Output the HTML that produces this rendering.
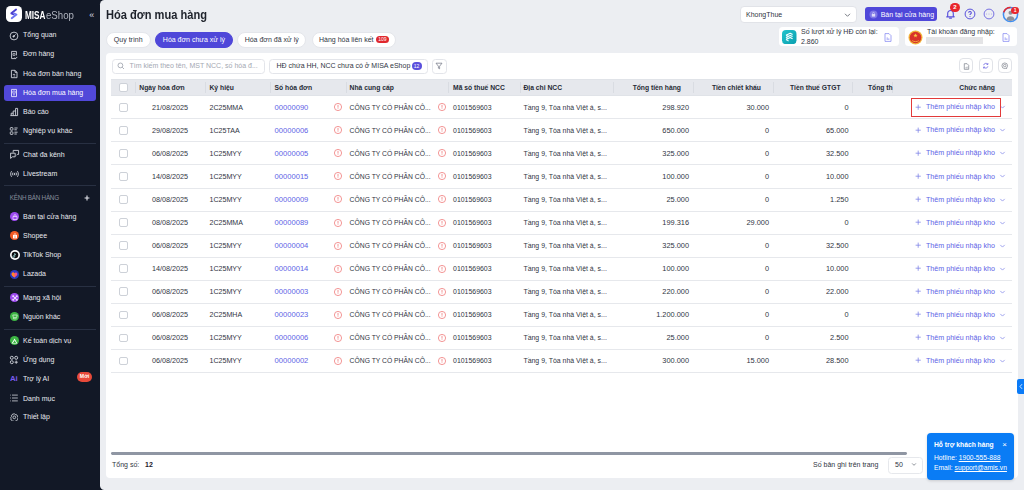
<!DOCTYPE html>
<html><head><meta charset="utf-8"><title>Hóa đơn mua hàng</title>
<style>
*{box-sizing:border-box;margin:0;padding:0}
html,body{width:1024px;height:490px;overflow:hidden}
body{position:relative;background:#121826;font-family:"Liberation Sans",sans-serif;color:#262b36;font-size:7px}
.t{position:absolute;white-space:nowrap;line-height:10px;font-size:7px;color:#30353f}
.r{text-align:right}
.b{font-weight:700}
.lk{color:#5d63e6}
.pl{color:#6b72e0;font-size:9px}
#main{position:absolute;left:100px;top:0;width:924px;height:490px;background:#eceef2;border-radius:4.5px 0 0 4.5px}
.card{position:absolute;left:106px;top:53px;width:912px;height:425px;background:#fff;border-radius:4px}
.rl{position:absolute;left:111px;width:901px;height:1px;background:#e6e8ec}
.cb{position:absolute;left:119.2px;width:8.8px;height:8.8px;border:1px solid #cdd1d8;border-radius:2px;background:#fff}
.wi{position:absolute;width:10px;height:10px}
.wi svg{display:block}
.chev{position:absolute}
.redbox{position:absolute;left:911.2px;top:97.9px;width:90.2px;height:19px;border:1.3px solid #e23a3a}
.th{position:absolute;top:79px;left:111px;width:901px;height:17px;background:#e6e8ed;border-top:1px solid #e0e3e8;border-bottom:1px solid #e0e3e8}
.hs{position:absolute;top:82px;width:1px;height:11px;background:#d9dce2}
.ht{position:absolute;white-space:nowrap;line-height:10px;top:82.8px;font-size:6.75px;font-weight:700;color:#262b36}
.mi{position:absolute;left:23px;white-space:nowrap;line-height:10px;font-size:7px;color:#e8eaf0}
.ic{position:absolute;left:9px}
.dv{position:absolute;left:4px;width:92px;height:1px;background:#283042}
.ch{position:absolute;left:10px;width:9px;height:9px;border-radius:50%}
.pill{position:absolute;top:31.5px;height:16px;border-radius:8px;background:#fff;border:0.8px solid #e4e6eb;line-height:14.4px;font-size:7px;color:#30353f;text-align:center;white-space:nowrap}
.ibtn{position:absolute;top:58.3px;width:14.3px;height:15.2px;border:1px solid #e1e3e8;border-radius:4px;background:#fff}

</style></head><body>
<div style="position:absolute;left:6px;top:6.1px;width:15.8px;height:15.8px;border-radius:4.5px;background:#fff"></div>
<svg style="position:absolute;left:6px;top:6.1px" width="15.8" height="15.8" viewBox="0 0 16 16"><path d="M10.2 3.6 5.4 7.4 7.6 8.4" fill="none" stroke="#4a40cf" stroke-width="1.9" stroke-linejoin="round" stroke-linecap="round"/><path d="M8.4 7.6 10.6 8.6 5.8 12.4" fill="none" stroke="#6b73f2" stroke-width="1.9" stroke-linejoin="round" stroke-linecap="round"/></svg>
<div class="t" style="left:25.4px;top:10.2px;font-size:10.5px;line-height:10px;color:#fff;font-weight:700;transform:scaleX(0.78);transform-origin:0 0">MISA</div>
<div class="t" style="left:46.4px;top:10.2px;font-size:10.5px;line-height:10px;color:#aeb2bd;transform:scaleX(0.92);transform-origin:0 0">eShop</div>
<div class="t" style="left:89.3px;top:9.6px;font-size:9px;color:#d6d9e0">«</div>
<svg class="ic" style="top:30.5px" width="10" height="10" viewBox="0 0 10 10" fill="none" stroke="#d3d6de" stroke-width="0.9"><circle cx="5" cy="5" r="3.9"/><path d="M6.6 3.4 4.8 5.2"/><circle cx="4.6" cy="5.4" r="0.7" fill="#d3d6de"/></svg>
<div class="mi" style="top:30px">Tổng quan</div>
<svg class="ic" style="top:49.5px" width="10" height="10" viewBox="0 0 10 10" fill="none" stroke="#d3d6de" stroke-width="0.9"><path d="M6.8 8.6H2.6V1.4h4.8v4"/><path d="M4 3.4h2v2H4z" stroke-width="0.7"/><path d="M5.8 7.6l.9.9 1.6-1.6"/></svg>
<div class="mi" style="top:49px">Đơn hàng</div>
<svg class="ic" style="top:68.5px" width="10" height="10" viewBox="0 0 10 10" fill="none" stroke="#d3d6de" stroke-width="0.9"><path d="M2.4 1.3h3.6l2 2v5.4H2.4z"/><path d="M6 1.3v2h2"/><path d="M3.8 5.4h2.4M4.6 7h1.6" stroke-width="0.8"/></svg>
<div class="mi" style="top:68.8px">Hóa đơn bán hàng</div>
<div style="position:absolute;left:3.7px;top:85.3px;width:92.3px;height:15.5px;border-radius:3px;background:#5148d9"></div>
<svg class="ic" style="top:87.7px" width="10" height="10" viewBox="0 0 10 10" fill="none" stroke="#e6e4fb" stroke-width="0.9"><path d="M2.5 1.4h5v7.2h-5z"/><path d="M3.8 3h2.4v2.2H3.8z" stroke-width="0.7"/><path d="M4 6.8h2" stroke-width="0.7"/></svg>
<div class="mi" style="top:87.7px;color:#fff">Hóa đơn mua hàng</div>
<svg class="ic" style="top:107px" width="10" height="10" viewBox="0 0 10 10" fill="none" stroke="#d3d6de" stroke-width="0.9"><path d="M1.4 8.6h7.2V1.4H6.6v7.2M6.6 4H4.2v4.6M4.2 6.2H2.2v2.4"/></svg>
<div class="mi" style="top:107px">Báo cáo</div>
<svg class="ic" style="top:126px" width="10" height="10" viewBox="0 0 10 10" fill="none" stroke="#d3d6de" stroke-width="0.9"><rect x="1.3" y="1.6" width="2.6" height="2.6" rx="0.6"/><rect x="1.3" y="5.8" width="2.6" height="2.6" rx="0.6"/><path d="M5.4 2h3.2M5.4 3.8h2.4M5.4 6.2h3.2M5.4 8h2.4"/></svg>
<div class="mi" style="top:126px;font-size:7.15px">Nghiệp vụ khác</div>
<div class="dv" style="top:143px"></div>
<svg class="ic" style="top:149px" width="11" height="11" viewBox="0 0 11 11" fill="none" stroke="#d3d6de" stroke-width="0.9"><path d="M4.2 1.4h5.4v4H8.4l-.8 .9M4.2 1.4v2.2"/><path d="M1.4 4.2h4.8v3.6H3.4l-1.8 1.6V4.2"/></svg>
<div class="mi" style="top:149.5px">Chat đa kênh</div>
<svg class="ic" style="top:169px" width="11" height="10" viewBox="0 0 11 10" fill="none" stroke="#d3d6de" stroke-width="0.9"><path d="M2.6 2.2C1.4 3.6 1.4 6.4 2.6 7.8M8.4 2.2c1.2 1.4 1.2 4.2 0 5.6M3.9 3.6c-.6.8-.6 2 0 2.8M7.1 3.6c.6.8.6 2 0 2.8"/><circle cx="5.5" cy="5" r="0.6" fill="#d3d6de"/></svg>
<div class="mi" style="top:169px">Livestream</div>
<div class="dv" style="top:185.3px"></div>
<div class="mi" style="left:9.8px;top:192.9px;font-size:6.3px;letter-spacing:-0.24px;color:#878d9c">KÊNH BÁN HÀNG</div>
<svg class="ic" style="left:84.2px;top:195px" width="6" height="6" viewBox="0 0 6 6"><path d="M3 .6v4.8M.6 3h4.8" stroke="#e6e8ee" stroke-width="1.1"/></svg>
<div class="ch" style="top:212.2px;background:#9d4af0"></div>
<svg class="ic" style="left:11.5px;top:214px" width="6" height="6" viewBox="0 0 6 6" fill="none" stroke="#f0e6ff" stroke-width="0.7"><path d="M1 2.5h4v3H1z"/><path d="M2 2.5V1.6a1 1 0 0 1 2 0v.9"/></svg>
<div class="mi" style="top:211.6px">Bán tại cửa hàng</div>
<div class="ch" style="top:231.4px;background:#f25a24"></div>
<svg class="ic" style="left:11.5px;top:233.4px" width="6" height="6" viewBox="0 0 6 6"><path d="M1 2h4v3.4H1z" fill="#fff"/><path d="M2.2 2V1.4a.8.8 0 0 1 1.6 0V2" fill="none" stroke="#fff" stroke-width="0.6"/><path d="M3 2.6v2.4" stroke="#f25a24" stroke-width="0.6"/></svg>
<div class="mi" style="top:231.1px">Shopee</div>
<svg class="ic" style="left:9.5px;top:250.2px" width="10" height="10" viewBox="0 0 10 10"><circle cx="5" cy="5" r="5" fill="#fff"/><circle cx="5" cy="5" r="3.3" fill="#0d0d10"/></svg>
<svg class="ic" style="left:12.3px;top:252.6px" width="5" height="5" viewBox="0 0 5 5" fill="none" stroke="#bff" stroke-width="0.7"><path d="M2.7 .5v3a.9.9 0 1 1-.9-.9M2.7 .5c.2.6.6 1 1.3 1.1"/></svg>
<div class="mi" style="top:250.1px">TikTok Shop</div>
<div class="ch" style="top:270px;background:#2c3bbd"></div>
<svg class="ic" style="left:11.3px;top:272px" width="7" height="6" viewBox="0 0 7 6"><path d="M3.5 5.4C1.6 4.2.6 3.2.6 2 .6 1 1.4.4 2.2.4c.6 0 1 .3 1.3.8.3-.5.7-.8 1.3-.8.8 0 1.6.6 1.6 1.6 0 1.2-1 2.2-2.9 3.4z" fill="#f5508a"/><path d="M3.5 5.4C1.6 4.2.6 3.2.6 2 .6 1 1.4.4 2.2.4c.6 0 1 .3 1.3.8z" fill="#ff8a1e"/></svg>
<div class="mi" style="top:269.1px">Lazada</div>
<div class="dv" style="top:286px"></div>
<div class="ch" style="top:293.2px;background:#9d4af0"></div>
<svg class="ic" style="left:11.5px;top:295.2px" width="6" height="6" viewBox="0 0 6 6" fill="#f3eaff" stroke="#f3eaff" stroke-width="0.6"><path d="M1.2 1.2 4.8 4.8M4.8 1.2 1.2 4.8"/><circle cx="1.2" cy="1.2" r=".7"/><circle cx="4.8" cy="1.2" r=".7"/><circle cx="1.2" cy="4.8" r=".7"/><circle cx="4.8" cy="4.8" r=".7"/><circle cx="3" cy="3" r=".8"/></svg>
<div class="mi" style="top:293.1px">Mạng xã hội</div>
<div class="ch" style="top:312.3px;background:#3db544"></div>
<svg class="ic" style="left:11.5px;top:314.3px" width="6" height="6" viewBox="0 0 6 6" fill="none" stroke="#dff5df" stroke-width="0.7"><path d="M.8 1h4.4L4.6 3.6H1.4z"/><path d="M1.4 3.6v1.2h3.2"/></svg>
<div class="mi" style="top:312.1px">Nguồn khác</div>
<div class="dv" style="top:329.4px"></div>
<div class="ch" style="top:336px;background:#3db544"></div>
<svg class="ic" style="left:11px;top:337.5px" width="7" height="6" viewBox="0 0 7 6" fill="#fff"><path d="M3.6.6 6.4 5.4H.6z M3.6 2.2 2 5h3.2z" fill-rule="evenodd"/></svg>
<div class="mi" style="top:336.1px">Kế toán dịch vụ</div>
<svg class="ic" style="top:354.5px" width="10" height="10" viewBox="0 0 10 10" fill="none" stroke="#d3d6de" stroke-width="0.9"><circle cx="2.8" cy="2.8" r="1.5"/><circle cx="7.2" cy="2.8" r="1.5"/><circle cx="2.8" cy="7.2" r="1.5"/><path d="M7.2 5.6v3.2M5.6 7.2h3.2"/></svg>
<div class="mi" style="top:354.5px">Ứng dụng</div>
<div class="mi" style="left:10px;top:373.6px;color:#7b5cf4;font-weight:700;font-size:7.8px;letter-spacing:-0.2px">Ai</div>
<div class="mi" style="top:373.5px">Trợ lý AI</div>
<div style="position:absolute;left:76.9px;top:372.2px;width:15.3px;height:9.6px;border-radius:5px;background:#e84a3a;color:#fff;font-size:5.2px;line-height:9.6px;text-align:center;font-weight:700">Mới</div>
<svg class="ic" style="top:393.3px" width="10" height="10" viewBox="0 0 10 10" fill="none" stroke="#d3d6de" stroke-width="0.8"><path d="M1.2 2.1h.7M3 2.1h5.8M1.2 5h.7M3 5h5.8M1.2 7.9h.7M3 7.9h5.8"/></svg>
<div class="mi" style="top:393.5px">Danh mục</div>
<svg class="ic" style="left:9.7px;top:412.6px" width="8.6" height="8.6" viewBox="0 0 10 10" fill="none" stroke="#d3d6de" stroke-width="0.95"><path d="M5 .9l1 .9 1.3-.2.5 1.2 1.2.5-.2 1.3.9 1-.9 1 .2 1.3-1.2.5-.5 1.2-1.3-.2-1 .9-1-.9-1.3.2-.5-1.2-1.2-.5.2-1.3L.9 5l.9-1-.2-1.3 1.2-.5.5-1.2 1.3.2z"/><circle cx="5" cy="5" r="1.6"/></svg>
<div class="mi" style="top:412px">Thiết lập</div>

<div id="main"></div>
<div class="t b" style="left:106px;top:8.1px;font-size:12.3px;line-height:14px;color:#1e222b;transform:scaleX(0.903);transform-origin:0 0">Hóa đơn mua hàng</div>
<div class="pill" style="left:106px;width:44.5px">Quy trình</div>
<div class="pill" style="left:155.3px;width:77.3px;background:#4f47d9;border-color:#4f47d9;color:#fff">Hóa đơn chưa xử lý</div>
<div class="pill" style="left:237.2px;width:69px">Hóa đơn đã xử lý</div>
<div class="pill" style="left:311.5px;width:84.7px;text-align:left;padding-left:6.5px">Hàng hóa liên kết</div>
<div style="position:absolute;left:376px;top:36.3px;width:12.7px;height:6.7px;border-radius:3.5px;background:#e0282e;color:#fff;font-size:5px;line-height:6.7px;text-align:center">109</div>
<!-- dropdown -->
<div style="position:absolute;left:740.2px;top:6px;width:116.6px;height:17px;border-radius:4px;background:#fff;border:1px solid #e1e3e8"></div>
<div class="t" style="left:746px;top:9.5px">KhongThue</div>
<svg style="position:absolute;left:844px;top:11.5px" width="7" height="6" viewBox="0 0 7 6"><path d="M1 1.8l2.5 2.5L6 1.8" fill="none" stroke="#555b66" stroke-width="0.8"/></svg>
<div style="position:absolute;left:865px;top:7.1px;width:72px;height:14px;border-radius:3px;background:#4f47d9"></div>
<svg style="position:absolute;left:869px;top:10px" width="9" height="9" viewBox="0 0 9 9"><circle cx="4.5" cy="4.5" r="4" fill="#7d76e6"/><path d="M2.8 4h3.4v2.6H2.8z" fill="#dcdaf8"/><path d="M3.6 4V3.3a.9.9 0 0 1 1.8 0V4" fill="none" stroke="#dcdaf8" stroke-width="0.6"/></svg>
<div class="t" style="left:880.7px;top:9.6px;color:#fff">Bán tại cửa hàng</div>
<!-- bell -->
<svg style="position:absolute;left:945.3px;top:8px" width="11" height="11" viewBox="0 0 11 11" fill="none" stroke="#5a52dc" stroke-width="1.15"><path d="M2.7 7.9V5.3a2.8 2.8 0 0 1 5.6 0v2.6l.9 1H1.8z" stroke-linejoin="round"/><path d="M4.5 10.1h2" stroke-linecap="round"/></svg>
<div style="position:absolute;left:950px;top:2.8px;width:9.6px;height:9.6px;border-radius:50%;background:#e8262c;color:#fff;font-size:6px;line-height:9.6px;text-align:center;font-weight:700">2</div>
<!-- help -->
<svg style="position:absolute;left:964px;top:8.1px" width="12" height="12" viewBox="0 0 12 12" fill="none" stroke="#5a52dc" stroke-width="1"><circle cx="6" cy="6" r="4.9"/><path d="M4.7 4.8a1.3 1.3 0 1 1 1.9 1.1c-.4.2-.6.5-.6.9v.3" stroke-width="1.1"/><circle cx="6" cy="8.5" r="0.6" fill="#5a52dc" stroke="none"/></svg>
<svg style="position:absolute;left:983.2px;top:8.1px" width="12" height="12" viewBox="0 0 12 12"><circle cx="6" cy="6" r="4.9" fill="none" stroke="#6a62e0" stroke-width="0.9"/><circle cx="3.5" cy="6" r="0.45" fill="#7a73e4"/><circle cx="6" cy="6" r="0.45" fill="#7a73e4"/><circle cx="8.5" cy="6" r="0.45" fill="#7a73e4"/></svg>
<!-- avatar -->
<svg style="position:absolute;left:1002px;top:5.7px" width="17" height="17" viewBox="0 0 17 17"><circle cx="8.5" cy="8.5" r="7.1" fill="#ececee" stroke="#3f8ef2" stroke-width="1.5"/><path d="M1.7 6.4A7.1 7.1 0 0 1 8.5 1.4" fill="none" stroke="#e8262c" stroke-width="1.5"/><circle cx="8.5" cy="6.8" r="2" fill="#8e9199"/><path d="M4.4 13.6c.3-2.2 2-3.4 4.1-3.4s3.8 1.2 4.1 3.4c-1.1.9-2.5 1.4-4.1 1.4s-3-.5-4.1-1.4z" fill="#8e9199"/></svg>
<div style="position:absolute;left:1011.3px;top:6.6px;width:7.6px;height:7.6px;border-radius:50%;background:#e8262c;color:#fff;font-size:5px;line-height:7.6px;text-align:center;font-weight:700">1</div>
<!-- info cards -->
<div style="position:absolute;left:778.8px;top:27.2px;width:120.7px;height:19px;border-radius:3.5px;background:#fff"></div>
<svg style="position:absolute;left:782.4px;top:29.8px" width="14.5" height="14.2" viewBox="0 0 14.5 14.2"><defs><linearGradient id="tg" x1="0" y1="0" x2="1" y2="1"><stop offset="0" stop-color="#22c4cc"/><stop offset="1" stop-color="#0a9fb0"/></linearGradient></defs><rect width="14.5" height="14.2" rx="4" fill="url(#tg)"/><path d="M4 5.2l4.2-2 2.4 1.2M4 7.4l4.2-2 2.4 1.2M4 9.6l4.2-2 2.4 1.2" fill="none" stroke="#fff" stroke-width="1.1" stroke-linejoin="round"/><path d="M4 5.2l2.6 1.3M4 7.4l2.6 1.3M4 9.6l2.6 1.3" fill="none" stroke="#e6fbfc" stroke-width="1.1"/></svg>
<div class="t" style="left:801px;top:26.6px">Số lượt xử lý HĐ còn lại:</div>
<div class="t" style="left:801px;top:36.9px">2.860</div>
<svg style="position:absolute;left:883.5px;top:32.6px" width="8" height="9" viewBox="0 0 8 9" fill="none" stroke="#8a8ef2" stroke-width="0.8"><path d="M1 .6h4l2 2v5.8H1z"/><path d="M3.2 4.4v2.6M4.8 5.4v1.6"/></svg>
<div style="position:absolute;left:904.8px;top:27.3px;width:112.6px;height:18.8px;border-radius:3.5px;background:#fff"></div>
<svg style="position:absolute;left:908px;top:29.6px" width="15" height="15" viewBox="0 0 15 15"><circle cx="7.5" cy="7.5" r="7" fill="#f2b43a"/><circle cx="7.5" cy="7.5" r="5.8" fill="#d8322a"/><path d="M7.5 3.4l.6 1.4 1.5.1-1.2 1 .4 1.5-1.3-.8-1.3.8.4-1.5-1.2-1 1.5-.1z" fill="#f7c844"/><path d="M4.2 10.6c1.8 1.4 4.8 1.4 6.6 0" fill="none" stroke="#f2b43a" stroke-width="0.9"/></svg>
<div class="t" style="left:927px;top:26.5px">Tài khoản đăng nhập:</div>
<div style="position:absolute;left:926px;top:37.1px;width:56.6px;height:7.4px;background:#e4e4e6;filter:blur(0.5px)"></div>
<svg style="position:absolute;left:1001.6px;top:33.2px" width="8" height="9" viewBox="0 0 8 9" fill="none" stroke="#8a8ef2" stroke-width="0.8"><path d="M1 .6h4l2 2v5.8H1z"/><path d="M3.2 4.4v2.6M4.8 5.4v1.6"/></svg>
<!-- card -->
<div class="card"></div>
<div style="position:absolute;left:111.5px;top:58.5px;width:153px;height:15px;border:1px solid #e3e5ea;border-radius:3.5px"></div>
<svg style="position:absolute;left:117px;top:62px" width="8" height="8" viewBox="0 0 8 8"><circle cx="3.4" cy="3.4" r="2.4" fill="none" stroke="#9aa0aa" stroke-width="0.8"/><path d="M5.2 5.2 7 7" stroke="#9aa0aa" stroke-width="0.8"/></svg>
<div class="t" style="left:129.5px;top:61px;color:#a3a8b2">Tìm kiếm theo tên, MST NCC, số hóa đ...</div>
<div style="position:absolute;left:269px;top:58.5px;width:158.5px;height:15px;border:1px solid #e3e5ea;border-radius:3.5px"></div>
<div class="t" style="left:276.5px;top:61px;color:#30353f">HĐ chứa HH, NCC chưa có ở MISA eShop</div>
<div style="position:absolute;left:411.5px;top:62px;width:10px;height:8px;border-radius:4px;background:#5a50dc;color:#fff;font-size:5px;line-height:8px;text-align:center">12</div>
<div style="position:absolute;left:431.5px;top:58.5px;width:15px;height:15px;border:1px solid #e3e5ea;border-radius:3.5px"></div>
<svg style="position:absolute;left:435px;top:62px" width="8" height="8" viewBox="0 0 8 8"><path d="M1 1.2h6L4.6 4.2v2.6L3.4 6.2V4.2z" fill="none" stroke="#6b7080" stroke-width="0.7" stroke-linejoin="round"/></svg>
<div class="ibtn" style="left:959px"></div>
<div class="ibtn" style="left:978.5px"></div>
<div class="ibtn" style="left:998px"></div>
<svg style="position:absolute;left:962.6px;top:62.6px" width="7" height="7" viewBox="0 0 7 7" fill="none" stroke="#777c87" stroke-width="0.7"><path d="M1.3.7h2.8l1.6 1.6v4H1.3z"/><path d="M3 4.2v1.2M4.1 3.6v1.8" stroke-width="0.6"/></svg>
<svg style="position:absolute;left:981.6px;top:62.3px" width="7.5" height="7.5" viewBox="0 0 8 8" fill="none" stroke="#6059de" stroke-width="0.75"><path d="M1.7 3.4A2.5 2.5 0 0 1 6.1 2.4M6.3 4.6a2.5 2.5 0 0 1-4.4 1"/><path d="M6.3 1.1v1.5H4.8M1.7 6.9V5.4h1.5"/></svg>
<svg style="position:absolute;left:1001.2px;top:62.3px" width="7.5" height="7.5" viewBox="0 0 8 8" fill="none" stroke="#777c87" stroke-width="0.7"><circle cx="4" cy="4" r="3"/><circle cx="4" cy="3.8" r="1.3"/><path d="M5.4 6.4l.9.9"/></svg>
<!-- header -->
<div class="th"></div>
<div class="cb" style="top:83px"></div>
<div class="hs" style="left:135px"></div>
<div class="hs" style="left:204.5px"></div>
<div class="hs" style="left:270px"></div>
<div class="hs" style="left:345.5px"></div>
<div class="hs" style="left:448px"></div>
<div class="hs" style="left:519.5px"></div>
<div class="hs" style="left:612.5px"></div>
<div class="hs" style="left:693px"></div>
<div class="hs" style="left:772.5px"></div>
<div class="hs" style="left:852px"></div>
<div class="hs" style="left:892px"></div>
<div class="ht" style="left:139.3px">Ngày hóa đơn</div>
<div class="ht" style="left:209.5px">Ký hiệu</div>
<div class="ht" style="left:274.6px">Số hóa đơn</div>
<div class="ht" style="left:349.6px">Nhà cung cấp</div>
<div class="ht" style="left:453.1px">Mã số thuế NCC</div>
<div class="ht" style="left:523.4px">Địa chỉ NCC</div>
<div class="ht r" style="right:343px">Tổng tiền hàng</div>
<div class="ht r" style="right:263px">Tiền chiết khấu</div>
<div class="ht r" style="right:183.5px">Tiền thuế GTGT</div>
<div class="ht" style="left:868px">Tổng th</div>
<div class="ht r" style="right:29px">Chức năng</div>
<!-- footer -->
<div style="position:absolute;left:111.3px;top:452.4px;width:795.7px;height:2.7px;border-radius:1.4px;background:#8f96a3"></div>
<div class="t" style="left:112px;top:460px">Tổng số:</div>
<div class="t b" style="left:145px;top:460px;color:#1e222b">12</div>
<div class="t" style="left:813px;top:460px">Số bản ghi trên trang</div>
<div style="position:absolute;left:887.5px;top:457px;width:35.5px;height:16.5px;border:1px solid #e6e8ec;border-radius:3.5px"></div>
<div class="t" style="left:895px;top:460px">50</div>
<svg style="position:absolute;left:910.5px;top:462.3px" width="6" height="5" viewBox="0 0 6 5"><path d="M1.1 1.4l1.9 1.9 1.9-1.9" fill="none" stroke="#6a707a" stroke-width="0.75"/></svg>
<!-- right side tab -->
<div style="position:absolute;left:1016.5px;top:379px;width:8px;height:14.5px;border-radius:2px 0 0 2px;background:#0b7bf7"></div>
<svg style="position:absolute;left:1017.5px;top:383px" width="6" height="7" viewBox="0 0 6 7"><path d="M4 1.2 2 3.5 4 5.8" fill="none" stroke="#fff" stroke-width="0.8"/></svg>
<!-- support -->
<div style="position:absolute;left:927px;top:433px;width:87px;height:47px;border-radius:4px;background:#0a7cf5;box-shadow:0 1px 3px rgba(0,0,0,.15)"></div>
<div class="t b" style="left:934px;top:439.9px;color:#fff;font-size:6.72px">Hỗ trợ khách hàng</div>
<div class="t" style="left:1002.2px;top:440.3px;color:#fff;font-size:8px">×</div>
<div class="t" style="left:934px;top:453.4px;color:#fff;font-size:6.72px">Hotline: <u style="text-decoration-thickness:0.6px;text-underline-offset:1px">1900-555-888</u></div>
<div class="t" style="left:934px;top:463.4px;color:#fff;font-size:6.72px">Email: <u style="text-decoration-thickness:0.6px;text-underline-offset:1px">support@amis.vn</u></div>

<div id="rows">
<div class="rl" style="top:118.30px"></div><div class="cb" style="top:102.80px"></div><div class="t" style="left:135px;width:70px;text-align:center;top:102.50px;font-size:7.23px">21/08/2025</div><div class="t" style="left:209.5px;top:102.50px;font-size:7.09px">2C25MMA</div><div class="t lk" style="left:274.6px;top:102.50px;font-size:7.59px">00000090</div><div class="wi" style="left:332.5px;top:102.10px"><svg width="10" height="10" viewBox="0 0 10 10"><circle cx="5" cy="5" r="3.6" fill="none" stroke="#f07c7c" stroke-width="0.8"/><path d="M5 3.3v2" stroke="#f07c7c" stroke-width="0.8" stroke-linecap="round"/><circle cx="5" cy="6.5" r="0.45" fill="#f07c7c"/></svg></div><div class="t" style="left:349.6px;top:102.50px;font-size:6.78px">CÔNG TY CỔ PHẦN CÔ...</div><div class="wi" style="left:437.2px;top:102.10px"><svg width="10" height="10" viewBox="0 0 10 10"><circle cx="5" cy="5" r="3.6" fill="none" stroke="#f07c7c" stroke-width="0.8"/><path d="M5 3.3v2" stroke="#f07c7c" stroke-width="0.8" stroke-linecap="round"/><circle cx="5" cy="6.5" r="0.45" fill="#f07c7c"/></svg></div><div class="t" style="left:453.1px;top:102.50px;font-size:6.92px">0101569603</div><div class="t" style="left:523.4px;top:102.50px;font-size:6.95px">Tầng 9, Tòa nhà Việt á, s...</div><div class="t r" style="right:335px;top:102.50px;font-size:7.39px">298.920</div><div class="t r" style="right:255px;top:102.50px;font-size:7.39px">30.000</div><div class="t r" style="right:175.5px;top:102.50px;font-size:7.39px">0</div><svg class="chev" style="left:915px;top:103.50px" width="6.4" height="6.4" viewBox="0 0 6.4 6.4"><path d="M3.2 .6v5.2M.6 3.2h5.2" stroke="#7a7fe6" stroke-width="0.75"/></svg><div class="t lk" style="left:926px;top:102.30px;font-size:7.13px">Thêm phiếu nhập kho</div><svg class="chev" style="left:999.3px;top:104.20px" width="7" height="6" viewBox="0 0 7 6"><path d="M1.3 1.9l2.2 2.2 2.2-2.2" fill="none" stroke="#7a7fe6" stroke-width="0.7"/></svg><div class="rl" style="top:141.38px"></div><div class="cb" style="top:125.88px"></div><div class="t" style="left:135px;width:70px;text-align:center;top:125.58px;font-size:7.23px">29/08/2025</div><div class="t" style="left:209.5px;top:125.58px;font-size:7.09px">1C25TAA</div><div class="t lk" style="left:274.6px;top:125.58px;font-size:7.59px">00000006</div><div class="wi" style="left:332.5px;top:125.18px"><svg width="10" height="10" viewBox="0 0 10 10"><circle cx="5" cy="5" r="3.6" fill="none" stroke="#f07c7c" stroke-width="0.8"/><path d="M5 3.3v2" stroke="#f07c7c" stroke-width="0.8" stroke-linecap="round"/><circle cx="5" cy="6.5" r="0.45" fill="#f07c7c"/></svg></div><div class="t" style="left:349.6px;top:125.58px;font-size:6.78px">CÔNG TY CỔ PHẦN CÔ...</div><div class="wi" style="left:437.2px;top:125.18px"><svg width="10" height="10" viewBox="0 0 10 10"><circle cx="5" cy="5" r="3.6" fill="none" stroke="#f07c7c" stroke-width="0.8"/><path d="M5 3.3v2" stroke="#f07c7c" stroke-width="0.8" stroke-linecap="round"/><circle cx="5" cy="6.5" r="0.45" fill="#f07c7c"/></svg></div><div class="t" style="left:453.1px;top:125.58px;font-size:6.92px">0101569603</div><div class="t" style="left:523.4px;top:125.58px;font-size:6.95px">Tầng 9, Tòa nhà Việt á, s...</div><div class="t r" style="right:335px;top:125.58px;font-size:7.39px">650.000</div><div class="t r" style="right:255px;top:125.58px;font-size:7.39px">0</div><div class="t r" style="right:175.5px;top:125.58px;font-size:7.39px">65.000</div><svg class="chev" style="left:915px;top:126.58px" width="6.4" height="6.4" viewBox="0 0 6.4 6.4"><path d="M3.2 .6v5.2M.6 3.2h5.2" stroke="#7a7fe6" stroke-width="0.75"/></svg><div class="t lk" style="left:926px;top:125.38px;font-size:7.13px">Thêm phiếu nhập kho</div><svg class="chev" style="left:999.3px;top:127.28px" width="7" height="6" viewBox="0 0 7 6"><path d="M1.3 1.9l2.2 2.2 2.2-2.2" fill="none" stroke="#7a7fe6" stroke-width="0.7"/></svg><div class="rl" style="top:164.46px"></div><div class="cb" style="top:148.96px"></div><div class="t" style="left:135px;width:70px;text-align:center;top:148.66px;font-size:7.23px">06/08/2025</div><div class="t" style="left:209.5px;top:148.66px;font-size:7.09px">1C25MYY</div><div class="t lk" style="left:274.6px;top:148.66px;font-size:7.59px">00000005</div><div class="wi" style="left:332.5px;top:148.26px"><svg width="10" height="10" viewBox="0 0 10 10"><circle cx="5" cy="5" r="3.6" fill="none" stroke="#f07c7c" stroke-width="0.8"/><path d="M5 3.3v2" stroke="#f07c7c" stroke-width="0.8" stroke-linecap="round"/><circle cx="5" cy="6.5" r="0.45" fill="#f07c7c"/></svg></div><div class="t" style="left:349.6px;top:148.66px;font-size:6.78px">CÔNG TY CỔ PHẦN CÔ...</div><div class="wi" style="left:437.2px;top:148.26px"><svg width="10" height="10" viewBox="0 0 10 10"><circle cx="5" cy="5" r="3.6" fill="none" stroke="#f07c7c" stroke-width="0.8"/><path d="M5 3.3v2" stroke="#f07c7c" stroke-width="0.8" stroke-linecap="round"/><circle cx="5" cy="6.5" r="0.45" fill="#f07c7c"/></svg></div><div class="t" style="left:453.1px;top:148.66px;font-size:6.92px">0101569603</div><div class="t" style="left:523.4px;top:148.66px;font-size:6.95px">Tầng 9, Tòa nhà Việt á, s...</div><div class="t r" style="right:335px;top:148.66px;font-size:7.39px">325.000</div><div class="t r" style="right:255px;top:148.66px;font-size:7.39px">0</div><div class="t r" style="right:175.5px;top:148.66px;font-size:7.39px">32.500</div><svg class="chev" style="left:915px;top:149.66px" width="6.4" height="6.4" viewBox="0 0 6.4 6.4"><path d="M3.2 .6v5.2M.6 3.2h5.2" stroke="#7a7fe6" stroke-width="0.75"/></svg><div class="t lk" style="left:926px;top:148.46px;font-size:7.13px">Thêm phiếu nhập kho</div><svg class="chev" style="left:999.3px;top:150.36px" width="7" height="6" viewBox="0 0 7 6"><path d="M1.3 1.9l2.2 2.2 2.2-2.2" fill="none" stroke="#7a7fe6" stroke-width="0.7"/></svg><div class="rl" style="top:187.54px"></div><div class="cb" style="top:172.04px"></div><div class="t" style="left:135px;width:70px;text-align:center;top:171.74px;font-size:7.23px">14/08/2025</div><div class="t" style="left:209.5px;top:171.74px;font-size:7.09px">1C25MYY</div><div class="t lk" style="left:274.6px;top:171.74px;font-size:7.59px">00000015</div><div class="wi" style="left:332.5px;top:171.34px"><svg width="10" height="10" viewBox="0 0 10 10"><circle cx="5" cy="5" r="3.6" fill="none" stroke="#f07c7c" stroke-width="0.8"/><path d="M5 3.3v2" stroke="#f07c7c" stroke-width="0.8" stroke-linecap="round"/><circle cx="5" cy="6.5" r="0.45" fill="#f07c7c"/></svg></div><div class="t" style="left:349.6px;top:171.74px;font-size:6.78px">CÔNG TY CỔ PHẦN CÔ...</div><div class="wi" style="left:437.2px;top:171.34px"><svg width="10" height="10" viewBox="0 0 10 10"><circle cx="5" cy="5" r="3.6" fill="none" stroke="#f07c7c" stroke-width="0.8"/><path d="M5 3.3v2" stroke="#f07c7c" stroke-width="0.8" stroke-linecap="round"/><circle cx="5" cy="6.5" r="0.45" fill="#f07c7c"/></svg></div><div class="t" style="left:453.1px;top:171.74px;font-size:6.92px">0101569603</div><div class="t" style="left:523.4px;top:171.74px;font-size:6.95px">Tầng 9, Tòa nhà Việt á, s...</div><div class="t r" style="right:335px;top:171.74px;font-size:7.39px">100.000</div><div class="t r" style="right:255px;top:171.74px;font-size:7.39px">0</div><div class="t r" style="right:175.5px;top:171.74px;font-size:7.39px">10.000</div><svg class="chev" style="left:915px;top:172.74px" width="6.4" height="6.4" viewBox="0 0 6.4 6.4"><path d="M3.2 .6v5.2M.6 3.2h5.2" stroke="#7a7fe6" stroke-width="0.75"/></svg><div class="t lk" style="left:926px;top:171.54px;font-size:7.13px">Thêm phiếu nhập kho</div><svg class="chev" style="left:999.3px;top:173.44px" width="7" height="6" viewBox="0 0 7 6"><path d="M1.3 1.9l2.2 2.2 2.2-2.2" fill="none" stroke="#7a7fe6" stroke-width="0.7"/></svg><div class="rl" style="top:210.62px"></div><div class="cb" style="top:195.12px"></div><div class="t" style="left:135px;width:70px;text-align:center;top:194.82px;font-size:7.23px">08/08/2025</div><div class="t" style="left:209.5px;top:194.82px;font-size:7.09px">1C25MYY</div><div class="t lk" style="left:274.6px;top:194.82px;font-size:7.59px">00000009</div><div class="wi" style="left:332.5px;top:194.42px"><svg width="10" height="10" viewBox="0 0 10 10"><circle cx="5" cy="5" r="3.6" fill="none" stroke="#f07c7c" stroke-width="0.8"/><path d="M5 3.3v2" stroke="#f07c7c" stroke-width="0.8" stroke-linecap="round"/><circle cx="5" cy="6.5" r="0.45" fill="#f07c7c"/></svg></div><div class="t" style="left:349.6px;top:194.82px;font-size:6.78px">CÔNG TY CỔ PHẦN CÔ...</div><div class="wi" style="left:437.2px;top:194.42px"><svg width="10" height="10" viewBox="0 0 10 10"><circle cx="5" cy="5" r="3.6" fill="none" stroke="#f07c7c" stroke-width="0.8"/><path d="M5 3.3v2" stroke="#f07c7c" stroke-width="0.8" stroke-linecap="round"/><circle cx="5" cy="6.5" r="0.45" fill="#f07c7c"/></svg></div><div class="t" style="left:453.1px;top:194.82px;font-size:6.92px">0101569603</div><div class="t" style="left:523.4px;top:194.82px;font-size:6.95px">Tầng 9, Tòa nhà Việt á, s...</div><div class="t r" style="right:335px;top:194.82px;font-size:7.39px">25.000</div><div class="t r" style="right:255px;top:194.82px;font-size:7.39px">0</div><div class="t r" style="right:175.5px;top:194.82px;font-size:7.39px">1.250</div><svg class="chev" style="left:915px;top:195.82px" width="6.4" height="6.4" viewBox="0 0 6.4 6.4"><path d="M3.2 .6v5.2M.6 3.2h5.2" stroke="#7a7fe6" stroke-width="0.75"/></svg><div class="t lk" style="left:926px;top:194.62px;font-size:7.13px">Thêm phiếu nhập kho</div><svg class="chev" style="left:999.3px;top:196.52px" width="7" height="6" viewBox="0 0 7 6"><path d="M1.3 1.9l2.2 2.2 2.2-2.2" fill="none" stroke="#7a7fe6" stroke-width="0.7"/></svg><div class="rl" style="top:233.70px"></div><div class="cb" style="top:218.20px"></div><div class="t" style="left:135px;width:70px;text-align:center;top:217.90px;font-size:7.23px">08/08/2025</div><div class="t" style="left:209.5px;top:217.90px;font-size:7.09px">2C25MMA</div><div class="t lk" style="left:274.6px;top:217.90px;font-size:7.59px">00000089</div><div class="wi" style="left:332.5px;top:217.50px"><svg width="10" height="10" viewBox="0 0 10 10"><circle cx="5" cy="5" r="3.6" fill="none" stroke="#f07c7c" stroke-width="0.8"/><path d="M5 3.3v2" stroke="#f07c7c" stroke-width="0.8" stroke-linecap="round"/><circle cx="5" cy="6.5" r="0.45" fill="#f07c7c"/></svg></div><div class="t" style="left:349.6px;top:217.90px;font-size:6.78px">CÔNG TY CỔ PHẦN CÔ...</div><div class="wi" style="left:437.2px;top:217.50px"><svg width="10" height="10" viewBox="0 0 10 10"><circle cx="5" cy="5" r="3.6" fill="none" stroke="#f07c7c" stroke-width="0.8"/><path d="M5 3.3v2" stroke="#f07c7c" stroke-width="0.8" stroke-linecap="round"/><circle cx="5" cy="6.5" r="0.45" fill="#f07c7c"/></svg></div><div class="t" style="left:453.1px;top:217.90px;font-size:6.92px">0101569603</div><div class="t" style="left:523.4px;top:217.90px;font-size:6.95px">Tầng 9, Tòa nhà Việt á, s...</div><div class="t r" style="right:335px;top:217.90px;font-size:7.39px">199.316</div><div class="t r" style="right:255px;top:217.90px;font-size:7.39px">29.000</div><div class="t r" style="right:175.5px;top:217.90px;font-size:7.39px">0</div><svg class="chev" style="left:915px;top:218.90px" width="6.4" height="6.4" viewBox="0 0 6.4 6.4"><path d="M3.2 .6v5.2M.6 3.2h5.2" stroke="#7a7fe6" stroke-width="0.75"/></svg><div class="t lk" style="left:926px;top:217.70px;font-size:7.13px">Thêm phiếu nhập kho</div><svg class="chev" style="left:999.3px;top:219.60px" width="7" height="6" viewBox="0 0 7 6"><path d="M1.3 1.9l2.2 2.2 2.2-2.2" fill="none" stroke="#7a7fe6" stroke-width="0.7"/></svg><div class="rl" style="top:256.78px"></div><div class="cb" style="top:241.28px"></div><div class="t" style="left:135px;width:70px;text-align:center;top:240.98px;font-size:7.23px">06/08/2025</div><div class="t" style="left:209.5px;top:240.98px;font-size:7.09px">1C25MYY</div><div class="t lk" style="left:274.6px;top:240.98px;font-size:7.59px">00000004</div><div class="wi" style="left:332.5px;top:240.58px"><svg width="10" height="10" viewBox="0 0 10 10"><circle cx="5" cy="5" r="3.6" fill="none" stroke="#f07c7c" stroke-width="0.8"/><path d="M5 3.3v2" stroke="#f07c7c" stroke-width="0.8" stroke-linecap="round"/><circle cx="5" cy="6.5" r="0.45" fill="#f07c7c"/></svg></div><div class="t" style="left:349.6px;top:240.98px;font-size:6.78px">CÔNG TY CỔ PHẦN CÔ...</div><div class="wi" style="left:437.2px;top:240.58px"><svg width="10" height="10" viewBox="0 0 10 10"><circle cx="5" cy="5" r="3.6" fill="none" stroke="#f07c7c" stroke-width="0.8"/><path d="M5 3.3v2" stroke="#f07c7c" stroke-width="0.8" stroke-linecap="round"/><circle cx="5" cy="6.5" r="0.45" fill="#f07c7c"/></svg></div><div class="t" style="left:453.1px;top:240.98px;font-size:6.92px">0101569603</div><div class="t" style="left:523.4px;top:240.98px;font-size:6.95px">Tầng 9, Tòa nhà Việt á, s...</div><div class="t r" style="right:335px;top:240.98px;font-size:7.39px">325.000</div><div class="t r" style="right:255px;top:240.98px;font-size:7.39px">0</div><div class="t r" style="right:175.5px;top:240.98px;font-size:7.39px">32.500</div><svg class="chev" style="left:915px;top:241.98px" width="6.4" height="6.4" viewBox="0 0 6.4 6.4"><path d="M3.2 .6v5.2M.6 3.2h5.2" stroke="#7a7fe6" stroke-width="0.75"/></svg><div class="t lk" style="left:926px;top:240.78px;font-size:7.13px">Thêm phiếu nhập kho</div><svg class="chev" style="left:999.3px;top:242.68px" width="7" height="6" viewBox="0 0 7 6"><path d="M1.3 1.9l2.2 2.2 2.2-2.2" fill="none" stroke="#7a7fe6" stroke-width="0.7"/></svg><div class="rl" style="top:279.86px"></div><div class="cb" style="top:264.36px"></div><div class="t" style="left:135px;width:70px;text-align:center;top:264.06px;font-size:7.23px">14/08/2025</div><div class="t" style="left:209.5px;top:264.06px;font-size:7.09px">1C25MYY</div><div class="t lk" style="left:274.6px;top:264.06px;font-size:7.59px">00000014</div><div class="wi" style="left:332.5px;top:263.66px"><svg width="10" height="10" viewBox="0 0 10 10"><circle cx="5" cy="5" r="3.6" fill="none" stroke="#f07c7c" stroke-width="0.8"/><path d="M5 3.3v2" stroke="#f07c7c" stroke-width="0.8" stroke-linecap="round"/><circle cx="5" cy="6.5" r="0.45" fill="#f07c7c"/></svg></div><div class="t" style="left:349.6px;top:264.06px;font-size:6.78px">CÔNG TY CỔ PHẦN CÔ...</div><div class="wi" style="left:437.2px;top:263.66px"><svg width="10" height="10" viewBox="0 0 10 10"><circle cx="5" cy="5" r="3.6" fill="none" stroke="#f07c7c" stroke-width="0.8"/><path d="M5 3.3v2" stroke="#f07c7c" stroke-width="0.8" stroke-linecap="round"/><circle cx="5" cy="6.5" r="0.45" fill="#f07c7c"/></svg></div><div class="t" style="left:453.1px;top:264.06px;font-size:6.92px">0101569603</div><div class="t" style="left:523.4px;top:264.06px;font-size:6.95px">Tầng 9, Tòa nhà Việt á, s...</div><div class="t r" style="right:335px;top:264.06px;font-size:7.39px">100.000</div><div class="t r" style="right:255px;top:264.06px;font-size:7.39px">0</div><div class="t r" style="right:175.5px;top:264.06px;font-size:7.39px">10.000</div><svg class="chev" style="left:915px;top:265.06px" width="6.4" height="6.4" viewBox="0 0 6.4 6.4"><path d="M3.2 .6v5.2M.6 3.2h5.2" stroke="#7a7fe6" stroke-width="0.75"/></svg><div class="t lk" style="left:926px;top:263.86px;font-size:7.13px">Thêm phiếu nhập kho</div><svg class="chev" style="left:999.3px;top:265.76px" width="7" height="6" viewBox="0 0 7 6"><path d="M1.3 1.9l2.2 2.2 2.2-2.2" fill="none" stroke="#7a7fe6" stroke-width="0.7"/></svg><div class="rl" style="top:302.94px"></div><div class="cb" style="top:287.44px"></div><div class="t" style="left:135px;width:70px;text-align:center;top:287.14px;font-size:7.23px">06/08/2025</div><div class="t" style="left:209.5px;top:287.14px;font-size:7.09px">1C25MYY</div><div class="t lk" style="left:274.6px;top:287.14px;font-size:7.59px">00000003</div><div class="wi" style="left:332.5px;top:286.74px"><svg width="10" height="10" viewBox="0 0 10 10"><circle cx="5" cy="5" r="3.6" fill="none" stroke="#f07c7c" stroke-width="0.8"/><path d="M5 3.3v2" stroke="#f07c7c" stroke-width="0.8" stroke-linecap="round"/><circle cx="5" cy="6.5" r="0.45" fill="#f07c7c"/></svg></div><div class="t" style="left:349.6px;top:287.14px;font-size:6.78px">CÔNG TY CỔ PHẦN CÔ...</div><div class="wi" style="left:437.2px;top:286.74px"><svg width="10" height="10" viewBox="0 0 10 10"><circle cx="5" cy="5" r="3.6" fill="none" stroke="#f07c7c" stroke-width="0.8"/><path d="M5 3.3v2" stroke="#f07c7c" stroke-width="0.8" stroke-linecap="round"/><circle cx="5" cy="6.5" r="0.45" fill="#f07c7c"/></svg></div><div class="t" style="left:453.1px;top:287.14px;font-size:6.92px">0101569603</div><div class="t" style="left:523.4px;top:287.14px;font-size:6.95px">Tầng 9, Tòa nhà Việt á, s...</div><div class="t r" style="right:335px;top:287.14px;font-size:7.39px">220.000</div><div class="t r" style="right:255px;top:287.14px;font-size:7.39px">0</div><div class="t r" style="right:175.5px;top:287.14px;font-size:7.39px">22.000</div><svg class="chev" style="left:915px;top:288.14px" width="6.4" height="6.4" viewBox="0 0 6.4 6.4"><path d="M3.2 .6v5.2M.6 3.2h5.2" stroke="#7a7fe6" stroke-width="0.75"/></svg><div class="t lk" style="left:926px;top:286.94px;font-size:7.13px">Thêm phiếu nhập kho</div><svg class="chev" style="left:999.3px;top:288.84px" width="7" height="6" viewBox="0 0 7 6"><path d="M1.3 1.9l2.2 2.2 2.2-2.2" fill="none" stroke="#7a7fe6" stroke-width="0.7"/></svg><div class="rl" style="top:326.02px"></div><div class="cb" style="top:310.52px"></div><div class="t" style="left:135px;width:70px;text-align:center;top:310.22px;font-size:7.23px">06/08/2025</div><div class="t" style="left:209.5px;top:310.22px;font-size:7.09px">2C25MHA</div><div class="t lk" style="left:274.6px;top:310.22px;font-size:7.59px">00000023</div><div class="wi" style="left:332.5px;top:309.82px"><svg width="10" height="10" viewBox="0 0 10 10"><circle cx="5" cy="5" r="3.6" fill="none" stroke="#f07c7c" stroke-width="0.8"/><path d="M5 3.3v2" stroke="#f07c7c" stroke-width="0.8" stroke-linecap="round"/><circle cx="5" cy="6.5" r="0.45" fill="#f07c7c"/></svg></div><div class="t" style="left:349.6px;top:310.22px;font-size:6.78px">CÔNG TY CỔ PHẦN CÔ...</div><div class="wi" style="left:437.2px;top:309.82px"><svg width="10" height="10" viewBox="0 0 10 10"><circle cx="5" cy="5" r="3.6" fill="none" stroke="#f07c7c" stroke-width="0.8"/><path d="M5 3.3v2" stroke="#f07c7c" stroke-width="0.8" stroke-linecap="round"/><circle cx="5" cy="6.5" r="0.45" fill="#f07c7c"/></svg></div><div class="t" style="left:453.1px;top:310.22px;font-size:6.92px">0101569603</div><div class="t" style="left:523.4px;top:310.22px;font-size:6.95px">Tầng 9, Tòa nhà Việt á, s...</div><div class="t r" style="right:335px;top:310.22px;font-size:7.39px">1.200.000</div><div class="t r" style="right:255px;top:310.22px;font-size:7.39px">0</div><div class="t r" style="right:175.5px;top:310.22px;font-size:7.39px">0</div><svg class="chev" style="left:915px;top:311.22px" width="6.4" height="6.4" viewBox="0 0 6.4 6.4"><path d="M3.2 .6v5.2M.6 3.2h5.2" stroke="#7a7fe6" stroke-width="0.75"/></svg><div class="t lk" style="left:926px;top:310.02px;font-size:7.13px">Thêm phiếu nhập kho</div><svg class="chev" style="left:999.3px;top:311.92px" width="7" height="6" viewBox="0 0 7 6"><path d="M1.3 1.9l2.2 2.2 2.2-2.2" fill="none" stroke="#7a7fe6" stroke-width="0.7"/></svg><div class="rl" style="top:349.10px"></div><div class="cb" style="top:333.60px"></div><div class="t" style="left:135px;width:70px;text-align:center;top:333.30px;font-size:7.23px">06/08/2025</div><div class="t" style="left:209.5px;top:333.30px;font-size:7.09px">1C25MYY</div><div class="t lk" style="left:274.6px;top:333.30px;font-size:7.59px">00000006</div><div class="wi" style="left:332.5px;top:332.90px"><svg width="10" height="10" viewBox="0 0 10 10"><circle cx="5" cy="5" r="3.6" fill="none" stroke="#f07c7c" stroke-width="0.8"/><path d="M5 3.3v2" stroke="#f07c7c" stroke-width="0.8" stroke-linecap="round"/><circle cx="5" cy="6.5" r="0.45" fill="#f07c7c"/></svg></div><div class="t" style="left:349.6px;top:333.30px;font-size:6.78px">CÔNG TY CỔ PHẦN CÔ...</div><div class="wi" style="left:437.2px;top:332.90px"><svg width="10" height="10" viewBox="0 0 10 10"><circle cx="5" cy="5" r="3.6" fill="none" stroke="#f07c7c" stroke-width="0.8"/><path d="M5 3.3v2" stroke="#f07c7c" stroke-width="0.8" stroke-linecap="round"/><circle cx="5" cy="6.5" r="0.45" fill="#f07c7c"/></svg></div><div class="t" style="left:453.1px;top:333.30px;font-size:6.92px">0101569603</div><div class="t" style="left:523.4px;top:333.30px;font-size:6.95px">Tầng 9, Tòa nhà Việt á, s...</div><div class="t r" style="right:335px;top:333.30px;font-size:7.39px">25.000</div><div class="t r" style="right:255px;top:333.30px;font-size:7.39px">0</div><div class="t r" style="right:175.5px;top:333.30px;font-size:7.39px">2.500</div><svg class="chev" style="left:915px;top:334.30px" width="6.4" height="6.4" viewBox="0 0 6.4 6.4"><path d="M3.2 .6v5.2M.6 3.2h5.2" stroke="#7a7fe6" stroke-width="0.75"/></svg><div class="t lk" style="left:926px;top:333.10px;font-size:7.13px">Thêm phiếu nhập kho</div><svg class="chev" style="left:999.3px;top:335.00px" width="7" height="6" viewBox="0 0 7 6"><path d="M1.3 1.9l2.2 2.2 2.2-2.2" fill="none" stroke="#7a7fe6" stroke-width="0.7"/></svg><div class="rl" style="top:372.18px"></div><div class="cb" style="top:356.68px"></div><div class="t" style="left:135px;width:70px;text-align:center;top:356.38px;font-size:7.23px">06/08/2025</div><div class="t" style="left:209.5px;top:356.38px;font-size:7.09px">1C25MYY</div><div class="t lk" style="left:274.6px;top:356.38px;font-size:7.59px">00000002</div><div class="wi" style="left:332.5px;top:355.98px"><svg width="10" height="10" viewBox="0 0 10 10"><circle cx="5" cy="5" r="3.6" fill="none" stroke="#f07c7c" stroke-width="0.8"/><path d="M5 3.3v2" stroke="#f07c7c" stroke-width="0.8" stroke-linecap="round"/><circle cx="5" cy="6.5" r="0.45" fill="#f07c7c"/></svg></div><div class="t" style="left:349.6px;top:356.38px;font-size:6.78px">CÔNG TY CỔ PHẦN CÔ...</div><div class="wi" style="left:437.2px;top:355.98px"><svg width="10" height="10" viewBox="0 0 10 10"><circle cx="5" cy="5" r="3.6" fill="none" stroke="#f07c7c" stroke-width="0.8"/><path d="M5 3.3v2" stroke="#f07c7c" stroke-width="0.8" stroke-linecap="round"/><circle cx="5" cy="6.5" r="0.45" fill="#f07c7c"/></svg></div><div class="t" style="left:453.1px;top:356.38px;font-size:6.92px">0101569603</div><div class="t" style="left:523.4px;top:356.38px;font-size:6.95px">Tầng 9, Tòa nhà Việt á, s...</div><div class="t r" style="right:335px;top:356.38px;font-size:7.39px">300.000</div><div class="t r" style="right:255px;top:356.38px;font-size:7.39px">15.000</div><div class="t r" style="right:175.5px;top:356.38px;font-size:7.39px">28.500</div><svg class="chev" style="left:915px;top:357.38px" width="6.4" height="6.4" viewBox="0 0 6.4 6.4"><path d="M3.2 .6v5.2M.6 3.2h5.2" stroke="#7a7fe6" stroke-width="0.75"/></svg><div class="t lk" style="left:926px;top:356.18px;font-size:7.13px">Thêm phiếu nhập kho</div><svg class="chev" style="left:999.3px;top:358.08px" width="7" height="6" viewBox="0 0 7 6"><path d="M1.3 1.9l2.2 2.2 2.2-2.2" fill="none" stroke="#7a7fe6" stroke-width="0.7"/></svg>
</div>
<div class="redbox"></div>
</body></html>
